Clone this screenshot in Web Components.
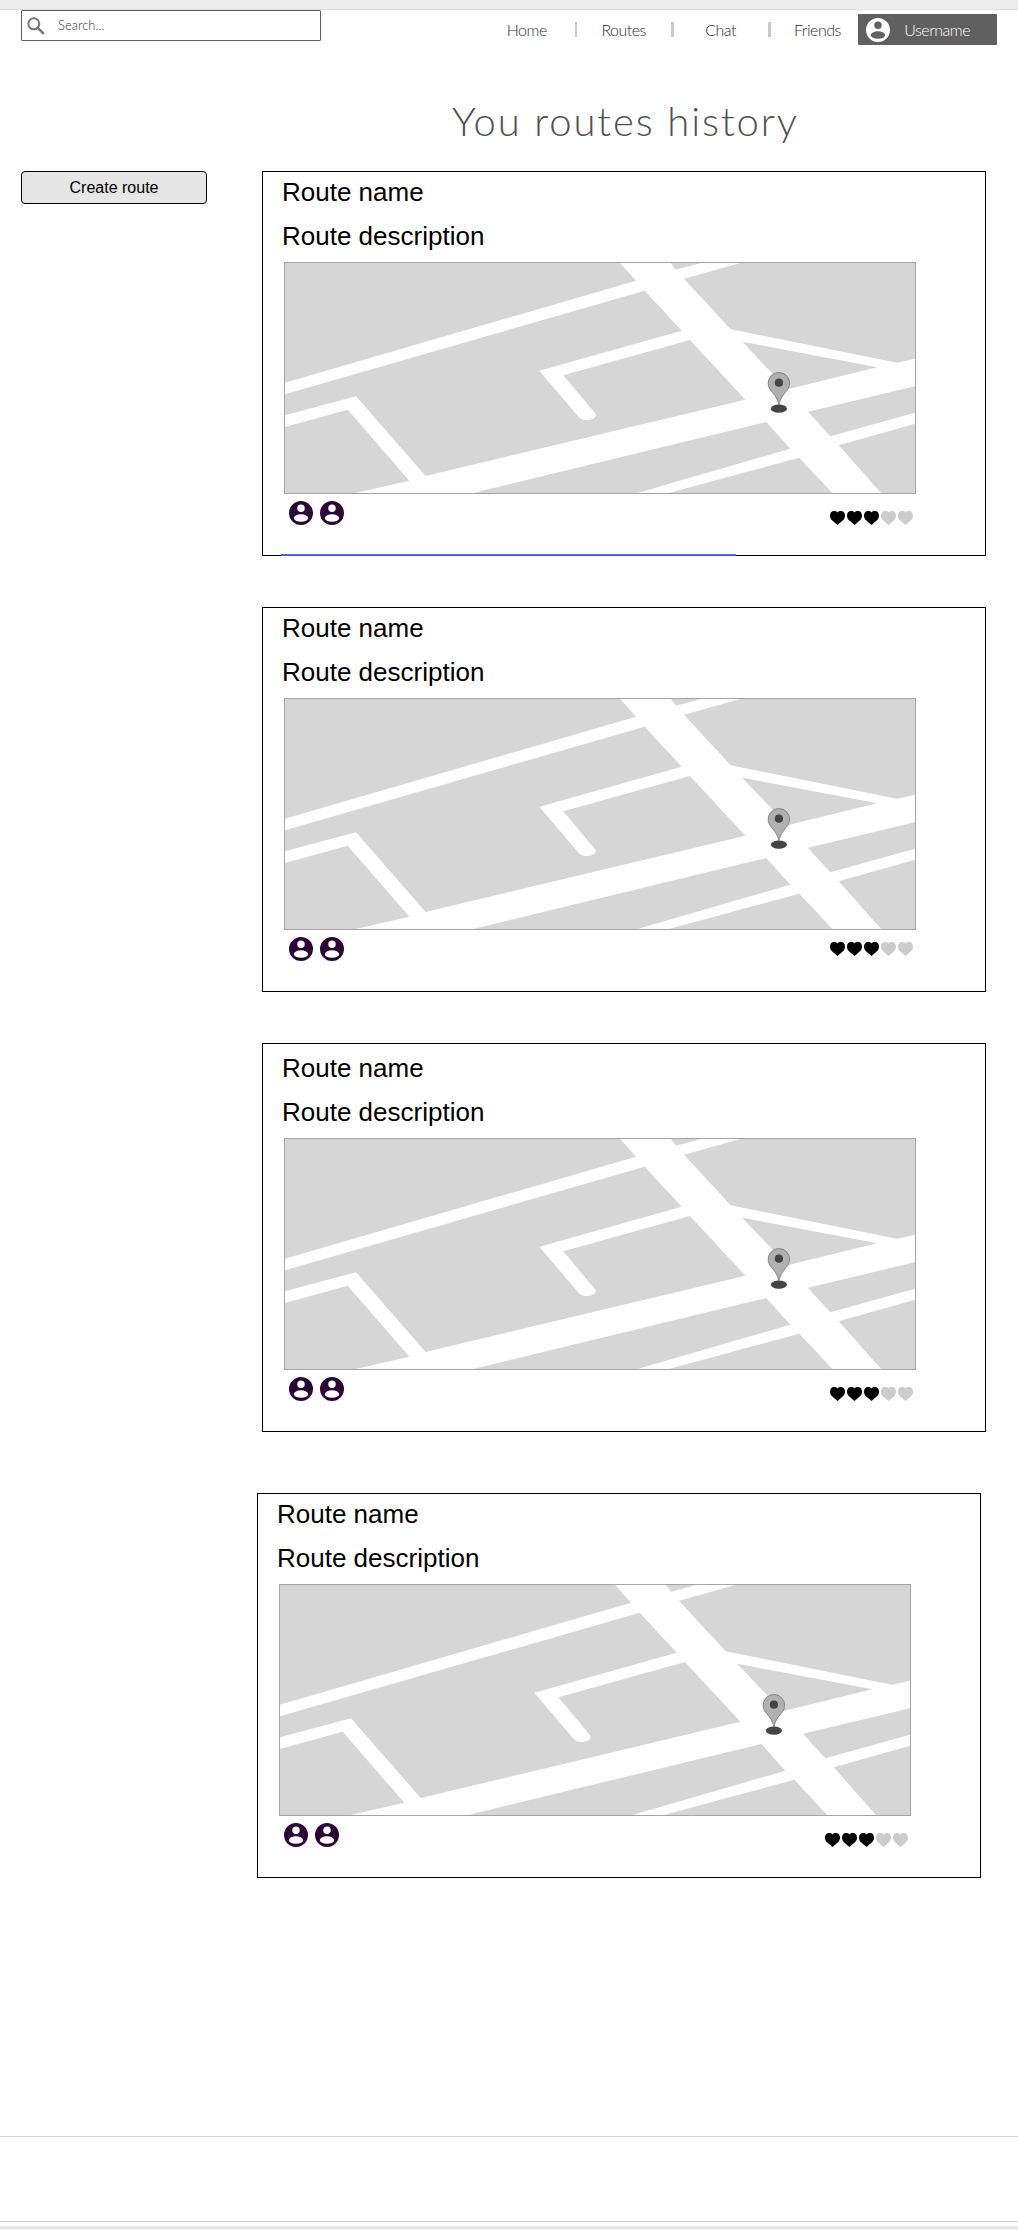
<!DOCTYPE html>
<html lang="en">
<head>
<meta charset="utf-8">
<title>Routes history</title>
<style>
html,body{margin:0;background:#fff}
body{font-family:"Liberation Sans",Arial,sans-serif;color:#000}
</style>
</head>
<body>
<routes-page></routes-page>
<script>
const define = (name, html, setup) => {
  const template = document.createElement('template');
  template.innerHTML = html;
  customElements.define(name, class extends HTMLElement {
    constructor() {
      super();
      this.attachShadow({ mode: 'open' }).append(template.content.cloneNode(true));
    }
    connectedCallback() { if (setup) setup(this, this.shadowRoot); }
  });
};

define('account-icon', `
<style>:host{display:block;width:24px;height:24px}svg{display:block;width:100%;height:100%}</style>
<svg viewBox="2 2 20 20" fill="currentColor"><path fill-rule="evenodd" d="M2 12a10 10 0 1 0 20 0a10 10 0 1 0 -20 0zM8.900 8a3.100 3.100 0 1 0 6.200 0a3.100 3.100 0 1 0 -6.200 0zM6 16.200a6 3.100 0 1 0 12 0a6 3.100 0 1 0 -12 0z"/></svg>`);

define('search-box', `
<style>
:host{display:flex;align-items:center;box-sizing:border-box;flex:none;width:300px;height:31px;border:1px solid #606060;border-radius:1px;background:#fff;padding-left:5px;font:300 13px/16px Lato,sans-serif;color:#333}
svg{width:18px;height:18px;margin-right:13px}
span{margin-top:-1px}
</style>
<svg viewBox="0 0 18 18" fill="none" stroke="#777" stroke-width="2"><circle cx="6.800" cy="6.800" r="5.500"/><path d="M10.800 10.800L16.800 16.800" stroke-width="2.400"/></svg><span><slot></slot></span>`);

define('nav-link', `
<style>
:host{display:flex;justify-content:center;flex:none;box-sizing:border-box;width:94.500px;padding-right:1px;font:300 16px/20px Lato,sans-serif;letter-spacing:-.5px;color:#303030}
</style><slot></slot>`);

define('nav-separator', `<style>:host{display:block;flex:none;width:2.400px;height:15px;background:#c8c8c8}</style>`);

define('user-chip', `
<style>
:host{display:flex;align-items:center;box-sizing:border-box;flex:none;width:139px;height:31px;background:#606060;border-radius:1px;color:#fff;padding-left:8px;font:300 16px/20px Lato,sans-serif;letter-spacing:-.5px}
account-icon{margin-right:14px}
</style><account-icon></account-icon><slot></slot>`);

define('page-header', `
<style>
:host{display:block;height:171px}
.strip{height:9px;background:#ededed;border-bottom:1px solid #dedede}
.bar{display:flex;padding-left:21px;height:36px}
nav{display:flex;align-items:center;flex:none;height:31px;margin:4px 0 0 159px;width:378.300px}
user-chip{margin-top:4px}
h1{margin:50px 0 0 452px;font:300 40px/50px Lato,sans-serif;letter-spacing:1.900px;color:#505050;white-space:nowrap}
</style>
<div class="strip"></div>
<div class="bar"><search-box>Search...</search-box>
<nav><nav-link>Home</nav-link><nav-separator></nav-separator><nav-link>Routes</nav-link><nav-separator></nav-separator><nav-link>Chat</nav-link><nav-separator></nav-separator><nav-link>Friends</nav-link></nav>
<user-chip>Username</user-chip></div>
<h1>You routes history</h1>`);

define('action-button', `
<style>
:host{display:block}
button{display:block;box-sizing:border-box;width:186px;height:33px;border:1px solid #000;border-radius:4px;background:#e6e6e6;color:#000;padding:0;font:16px/31px "Liberation Sans",Arial,sans-serif}
</style><button><slot></slot></button>`);

define('route-map', `
<style>:host{display:block;width:632px;height:232px}svg{display:block}</style>
<svg width="632" height="232" viewBox="0 0 632 232">
<rect width="632" height="232" fill="#fff"/>
<g fill="#d6d6d6">
<path d="M0 0H335.300L352 18.700 0 121z"/>
<path d="M386 0H421L392 7.700z"/>
<path d="M460 0H632V96.500L613 100.700 446.700 67.300 400 16.700z"/>
<path d="M458.300 79.700L593.300 105.300 503.300 127.300z"/>
<path d="M0 132.600L360.700 28.700 397.700 68.700 255.300 108.700 294.300 154.500C297 157.500 299.500 158 303 158S309.500 157 311 155C312.200 153.200 311.800 152.200 310.500 150.500L279.300 113.300 406 78 461.300 137.700 141.700 214 72 134.300 0 153.600z"/>
<path d="M0 165.300L63.700 147.700 125.300 218.700 67 232H0z"/>
<path d="M185 232L482.300 160 506.300 186.700 350 232z"/>
<path d="M381 232L515.300 195.700 549.200 232z"/>
<path d="M524 149.700L632 124V150.500L546.300 174.300z"/>
<path d="M554.700 183.300L632 161.500V232H598z"/>
</g>
<rect x=".5" y=".5" width="631" height="231" fill="none" stroke="#a5a5a5"/>
<ellipse cx="494.900" cy="146.700" rx="8.100" ry="4.100" fill="#444"/>
<path d="M494.900 143C493.500 136.500 491 133.500 487.700 129.500C485.500 127 484.200 124.700 484.200 121.200a10.700 10.700 0 0 1 21.400 0C505.600 124.700 504.300 127 502.100 129.500C498.800 133.500 496.300 136.500 494.900 143z" fill="#b0b0b0" stroke="#858585"/>
<circle cx="494.900" cy="120.700" r="4.100" fill="#444"/>
</svg>`);

define('heart-rating', `
<style>:host{display:flex;gap:2px}svg{width:15px;height:14px;fill:#ccc}svg.on{fill:#000}</style>`,
(host, root) => {
  const value = Number(host.getAttribute('value'));
  for (let i = 0; i < 5; i++) {
    root.innerHTML += `<svg class="${i < value ? 'on' : ''}" viewBox="0 0 15 14"><path d="M7.500 14L2.300 9.600C.7 8.100 0 6.500 0 4.500C0 1.900 1.600 0 4 0C5.500 0 6.700.500 7.500 1.400C8.300.500 9.500 0 11 0C13.400 0 15 1.900 15 4.500C15 6.500 14.300 8.100 12.700 9.600z"/></svg>`;
  }
});

define('route-card', `
<style>
:host{display:block;box-sizing:border-box;width:724px;height:385px;border:1px solid #000;padding:5px 0 0 19px}
.line{font-size:26px;line-height:30px;height:44px;white-space:nowrap}
.line + .line{height:41px}
route-map{margin-left:2px}
.foot{display:flex;justify-content:space-between;align-items:flex-start;width:631px;padding:7px 0 0 7px;box-sizing:border-box}
.people{display:flex;gap:7px;color:#2b0537}
heart-rating{margin-top:var(--rating-offset,10px)}
.underline{width:455px;height:2px;background:linear-gradient(#5477e0 50%,#3a5ccc 50%);margin:29px 0 0 -1px;display:none}
:host([active]) .underline{display:block}
</style>
<div class="line"><slot name="name"></slot></div>
<div class="line"><slot name="description"></slot></div>
<route-map></route-map>
<div class="foot"><div class="people"><account-icon></account-icon><account-icon></account-icon></div><heart-rating value="3"></heart-rating></div>
<div class="underline"></div>`);

define('page-footer', `
<style>
:host{display:block}
.area{height:84px;border-top:1px solid #d4d4d4;border-bottom:1px solid #d4d4d4}
.gap{height:4px}
.strip{height:4px;background:linear-gradient(#ededed 25%,#dfdfdf 25% 50%,#ededed 50%)}
</style><div class="area"></div><div class="gap"></div><div class="strip"></div>`);

define('routes-page', `
<style>
:host{display:flex;flex-direction:column;width:1018px;height:2230px;overflow:hidden}
main{display:flex;gap:55px;padding-left:21px;flex:1}
.list{display:flex;flex-direction:column}
route-card:nth-child(2){margin-top:51px;--rating-offset:5px}
route-card:nth-child(3){margin-top:51px;height:389px;padding-top:9px}
route-card:nth-child(4){margin:61px 0 0 -5px}
</style>
<page-header></page-header>
<main><action-button>Create route</action-button>
<div class="list"></div></main>
<page-footer></page-footer>`,
(host, root) => {
  root.querySelector('.list').innerHTML = Array.from({ length: 4 }, (_, i) =>
    `<route-card${i ? '' : ' active'}><span slot="name">Route name</span><span slot="description">Route description</span></route-card>`).join('');
});
</script>
</body>
</html>
